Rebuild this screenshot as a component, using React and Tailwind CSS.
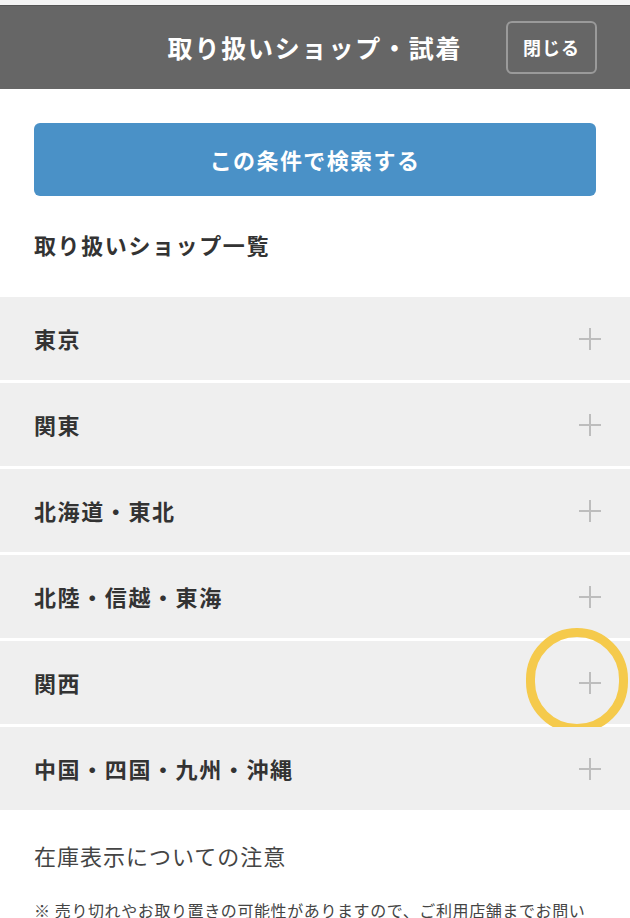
import React from "react";

const areas = [
  "東京",
  "関東",
  "北海道・東北",
  "北陸・信越・東海",
  "関西",
  "中国・四国・九州・沖縄",
];

const PlusIcon = () => (
  <svg width="24" height="24" viewBox="0 0 24 24" className="block">
    <path d="M12 1v22M1 12h22" stroke="#bdbdbd" strokeWidth="2" fill="none" />
  </svg>
);

const App = () => {
  return (
    <div
      className="w-[630px] min-h-[918px] bg-white text-[#333]"
      style={{ fontFamily: '"Noto Sans CJK JP", "Noto Sans", sans-serif' }}
    >
      {/* Header */}
      <div className="h-[6px] bg-[#f4f4f4] border-b border-[#555]" />
      <div className="relative h-[83px] bg-[#666666] flex items-center justify-center">
        <h1 className="text-[25px] font-bold text-white tracking-[1.8px]">
          取り扱いショップ・試着
        </h1>
        <button className="absolute right-[33px] top-[15px] w-[91px] h-[53px] rounded-[6px] border-2 border-[#9a9a9a] text-white text-[18px] font-bold tracking-[1px]">
          閉じる
        </button>
      </div>

      {/* Search */}
      <div className="px-[34px] pt-[34px]">
        <button className="w-full h-[73px] rounded-[6px] bg-[#4a91c7] text-white text-[22px] font-bold tracking-[1.4px]">
          この条件で検索する
        </button>
        <h2 className="mt-[33px] text-[22px] font-bold tracking-[1.6px] leading-[30px]">
          取り扱いショップ一覧
        </h2>
      </div>

      {/* Area list */}
      <div className="mt-[38px] flex flex-col gap-[3px]">
        {areas.map((area) => (
          <div
            key={area}
            className="relative h-[83px] bg-[#efefef] flex items-center justify-between pl-[34px] pr-[28px]"
          >
            <span className="text-[22px] font-bold tracking-[1.6px]">{area}</span>
            <PlusIcon />
            {area === "関西" && (
              <div className="absolute left-[526px] top-[-13px] w-[102px] h-[105px] rounded-full border-[9px] border-[#f5ca4c]" />
            )}
          </div>
        ))}
      </div>

      {/* Notes */}
      <div className="px-[34px] pt-[30px]">
        <h3 className="text-[22px] font-normal tracking-[1px] text-[#444] leading-[30px]">
          在庫表示についての注意
        </h3>
        <p className="mt-[26px] text-[16px] text-[#444] tracking-[0.6px] leading-[28px]">
          ※ 売り切れやお取り置きの可能性がありますので、ご利用店舗までお問い合わせください。
        </p>
      </div>
    </div>
  );
};

export default App;
